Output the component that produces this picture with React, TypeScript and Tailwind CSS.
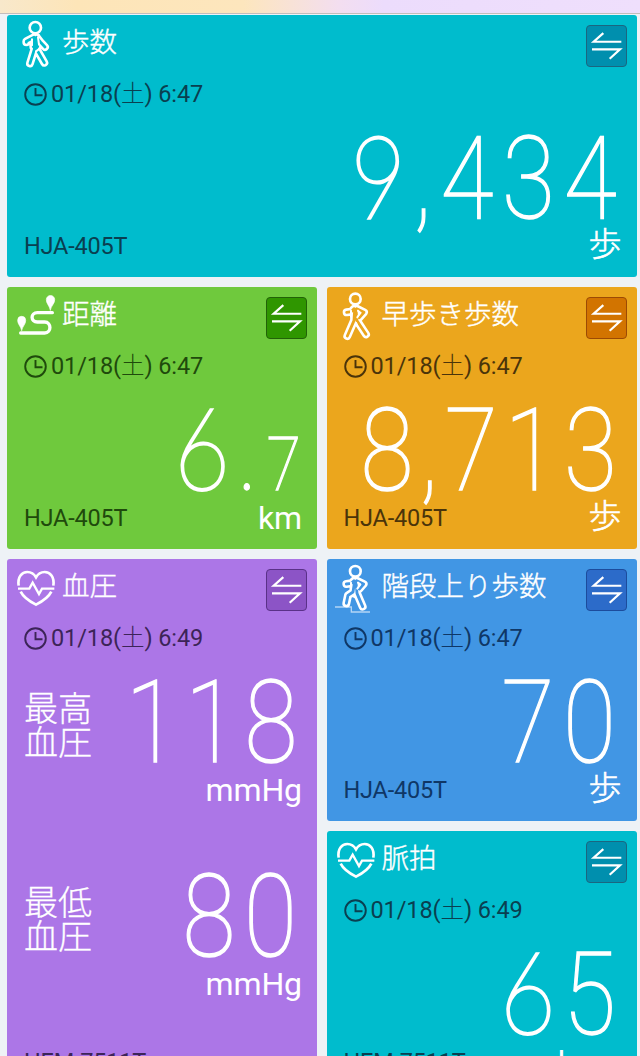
import type { ReactNode } from 'react';
import clsx from 'clsx';

type Theme = { card: string; ink: string; button: string; fill: string };

const teal: Theme = { card: 'bg-[#00bccd]', ink: 'text-[#0a3f50]', button: 'bg-[#008fae] border-[#1b6680]', fill: '#00bccd' };
const green: Theme = { card: 'bg-[#6fc93d]', ink: 'text-[#1f4a0c]', button: 'bg-[#2f9600] border-[#226208]', fill: '#6fc93d' };
const orange: Theme = { card: 'bg-[#eba61d]', ink: 'text-[#4a340a]', button: 'bg-[#d27400] border-[#9c4a05]', fill: '#eba61d' };
const purple: Theme = { card: 'bg-[#ac76e7]', ink: 'text-[#3c2458]', button: 'bg-[#8c54c6] border-[#5a3188]', fill: '#ac76e7' };
const blue: Theme = { card: 'bg-[#4196e4]', ink: 'text-[#0f3766]', button: 'bg-[#2c6bc9] border-[#1c4c9c]', fill: '#4196e4' };

const JP = "font-['Noto_Sans_CJK_JP',sans-serif]";
const LATIN = "font-['Roboto','Noto_Sans_CJK_JP',sans-serif]";

function Icon({ box, children }: { box: string; children: ReactNode }) {
  return (
    <svg className="mt-[3px] ml-2 h-[52px] w-11 shrink-0" viewBox={box} fill="none" stroke="white" strokeLinecap="round" strokeLinejoin="round">
      {children}
    </svg>
  );
}

function Figure({ limbs, fill }: { limbs: string; fill: string }) {
  return (
    <>
      <path d={limbs} strokeWidth="24" />
      <path d={limbs} strokeWidth="8.500" stroke={fill} />
    </>
  );
}

function WalkIcon() {
  return (
    <Icon box="45 54 132 156">
      <Figure fill="#00bccd" limbs="M102 112L79 124V127M110 112L121 126L135 141M103 112V148L90 190M110 112V148L133 188M100 116V140M113 120V140" />
      <circle cx="106" cy="83" r="17" strokeWidth="8" fill="#00bccd" />
      <path d="M96 118V136M114 112L117 134M108 154L116 148" strokeWidth="6" />
    </Icon>
  );
}

function FastWalkIcon() {
  return (
    <Icon box="45 30 132 156">
      <Figure fill="#eba61d" limbs="M102 86L94 95L80 97M110 86L132 97L118 113M104 88L102 122L82 168M108 90L111 122L138 163" />
      <circle cx="106" cy="57" r="16" strokeWidth="8" fill="#eba61d" />
      <path d="M93 92V110M114 92L121 98L112 112M108 128L112 138" strokeWidth="6" />
    </Icon>
  );
}

function StairsIcon() {
  return (
    <Icon box="45 36 132 156">
      <path d="M45 171H94V186H150" strokeWidth="4" strokeLinecap="butt" strokeLinejoin="miter" stroke="#b3d5f5" />
      <Figure fill="#4196e4" limbs="M102 92L94 100L79 102M110 92L131 102L118 117M104 94L99 126L84 136L79 160M108 96L111 130L128 170" />
      <circle cx="106" cy="64" r="16" strokeWidth="8" fill="#4196e4" />
      <path d="M93 98V114M114 98L121 103L112 116M98 138L106 142" strokeWidth="6" />
    </Icon>
  );
}

function RouteIcon() {
  return (
    <Icon box="45 30 132 156">
      <path d="M157 98H112C91 98 91 126 112 126H134C155 126 155 159 134 159H62" strokeWidth="10" />
      <path d="M151 90C148 76 139 71 139 59A12.500 12.500 0 0 1 164 59C164 71 154 76 151 90ZM65 151C62 138 53 133 53 121A12 12 0 0 1 77 121C77 133 68 138 65 151Z" fill="white" strokeWidth="2" />
    </Icon>
  );
}

function HeartIcon() {
  return (
    <Icon box="45 36 132 156">
      <g strokeWidth="8" strokeLinecap="butt" strokeLinejoin="miter">
        <path d="M56 107C52 80 66 66 82 66C95 66 103 73 108 82C113 73 121 66 134 66C150 66 164 80 160 107" />
        <path d="M54 116H88L98 98L117 132L126 116H163" strokeWidth="7" />
        <path d="M62 125C72 145 90 155 108 164C126 155 144 145 154 125" />
      </g>
    </Icon>
  );
}

function SwapButton({ theme }: { theme: Theme }) {
  return (
    <button className={clsx('mt-[10px] mr-[10px] ml-auto h-[41.500px] w-[41px] shrink-0 rounded-[4px] border-[1.500px]', theme.button)}>
      <svg className="block h-full w-full" viewBox="3 3 117 118" fill="none" stroke="white" strokeWidth="6.500">
        <path d="M106 50H23L52 24M18 73H102L71 101" />
      </svg>
    </button>
  );
}

function Clock() {
  return (
    <svg className="h-[23px] w-[23px] shrink-0" viewBox="0 0 23 23" fill="none" stroke="currentColor" strokeWidth="1.900">
      <circle cx="11.500" cy="11.500" r="10.300" />
      <path d="M11.500 5V12.300H18.500" />
    </svg>
  );
}

function Digits({ value, small }: { value: string; small?: string }) {
  // Numbers holding a narrow "1" are set slightly tighter.
  const tracking = value.includes('1') ? 'tracking-[8px] pr-[2px]' : 'tracking-[10.400px]';
  return (
    <div className="flex h-[104px] min-w-0 flex-1 justify-end">
      <div
        className={clsx(
          "w-max shrink-0 origin-right scale-x-[0.84] pt-px font-['Roboto',sans-serif] text-[115px] leading-[104px] font-thin whitespace-nowrap text-white [-webkit-text-stroke:1.400px_white]",
          tracking,
        )}
      >
        {value.split(/([69])/).map((part, i) =>
          part === '6' || part === '9' ? (
            <span key={i} className="font-['Lato',sans-serif] leading-[0] tracking-[8.600px] [-webkit-text-stroke:2.900px_white]">{part}</span>
          ) : (
            part
          ),
        )}
        {small && <span className="text-[74px] leading-[0] tracking-[6px]">{small}</span>}
      </div>
    </div>
  );
}

function Unit({ children }: { children: string }) {
  return (
    <span
      className={clsx(
        'ml-auto leading-7 text-white',
        children === '歩' ? [JP, '-mt-[2px] text-[33px] font-light [-webkit-text-stroke:0.600px_white]'] : [LATIN, 'mt-[2px] text-[32px] tracking-[-0.100px]'],
      )}
    >
      {children}
    </span>
  );
}

function Model({ theme, children }: { theme: Theme; children: string }) {
  return <span className={clsx(LATIN, 'mt-[2px] text-[23.500px] leading-7 tracking-[-0.200px]', theme.ink)}>{children}</span>;
}

type CardProps = { theme: Theme; icon: ReactNode; title: string; time: string; className?: string; children: ReactNode };

function Card({ theme, icon, title, time, className, children }: CardProps) {
  return (
    <section className={clsx('rounded-[3px]', theme.card, className)}>
      <header className="flex h-[62px] items-start">
        {icon}
        <h2 className={clsx(JP, 'mt-[9px] ml-[3px] text-[27.500px] leading-8 font-light whitespace-nowrap text-white [-webkit-text-stroke:0.400px_white]')}>{title}</h2>
        <SwapButton theme={theme} />
      </header>
      <div className={clsx('flex h-[34px] items-center pl-[17px]', theme.ink)}>
        <Clock />
        <time className={clsx(LATIN, 'ml-[4px] text-[23.500px] leading-8 tracking-[-0.100px] whitespace-nowrap')}>
          01/18(<span className="font-light">土</span>) {time}
        </time>
      </div>
      {children}
    </section>
  );
}

function StepCard({ value, small, unit, model, ...card }: Omit<CardProps, 'children'> & { value: string; small?: string; unit: string; model: string }) {
  return (
    <Card {...card}>
      <div className="mt-[15px] flex pr-[11.500px]">
        <Digits value={value} small={small} />
      </div>
      <div className="flex h-7 items-start pr-[15px] pl-[17px]">
        <Model theme={card.theme}>{model}</Model>
        <Unit>{unit}</Unit>
      </div>
    </Card>
  );
}

function Pressure({ label, value }: { label: string; value: string }) {
  return (
    <div className="h-[194px]">
      <div className="flex h-[104px] pr-[11px]">
        <div className={clsx(JP, 'mt-[20px] ml-[17px] w-[70px] shrink-0 text-[34px] leading-[34px] font-light text-white [-webkit-text-stroke:0.300px_white]')}>
          {label}
          <br />
          血圧
        </div>
        <Digits value={value} />
      </div>
      <div className="flex h-7 items-start pr-[15px]">
        <Unit>mmHg</Unit>
      </div>
    </div>
  );
}

export default function App() {
  return (
    <main className="h-[1056px] w-[640px] overflow-hidden bg-[#eef2f6]">
      <div className="h-[14px] border-b border-[#c3bdbc] bg-[linear-gradient(90deg,#f8e8cb_0%,#fde5b8_12%,#fde6bd_38%,#f3def0_53%,#ecdcfc_60%,#efdffc_100%)]" />
      <div className="grid grid-cols-[310px_310px] gap-x-[9.500px] pt-px pl-[7px]">
        <StepCard className="col-span-2 mb-[10px] h-[262px]" theme={teal} icon={<WalkIcon />} title="歩数" time="6:47" value="9,434" unit="歩" model="HJA-405T" />
        <div className="flex flex-col gap-[10px]">
          <StepCard className="h-[262px]" theme={green} icon={<RouteIcon />} title="距離" time="6:47" value="6." small="7" unit="km" model="HJA-405T" />
          <Card className="h-[534px]" theme={purple} icon={<HeartIcon />} title="血圧" time="6:49">
            <div className="mt-[15px]">
              <Pressure label="最高" value="118" />
              <Pressure label="最低" value="80" />
            </div>
            <div className="-mt-[12px] flex h-7 items-start pl-[17px]">
              <Model theme={purple}>HEM-7511T</Model>
            </div>
          </Card>
        </div>
        <div className="flex flex-col gap-[10px]">
          <StepCard className="h-[262px]" theme={orange} icon={<FastWalkIcon />} title="早歩き歩数" time="6:47" value="8,713" unit="歩" model="HJA-405T" />
          <StepCard className="h-[262px]" theme={blue} icon={<StairsIcon />} title="階段上り歩数" time="6:47" value="70" unit="歩" model="HJA-405T" />
          <StepCard className="h-[262px]" theme={teal} icon={<HeartIcon />} title="脈拍" time="6:49" value="65" unit="bpm" model="HEM-7511T" />
        </div>
      </div>
    </main>
  );
}
